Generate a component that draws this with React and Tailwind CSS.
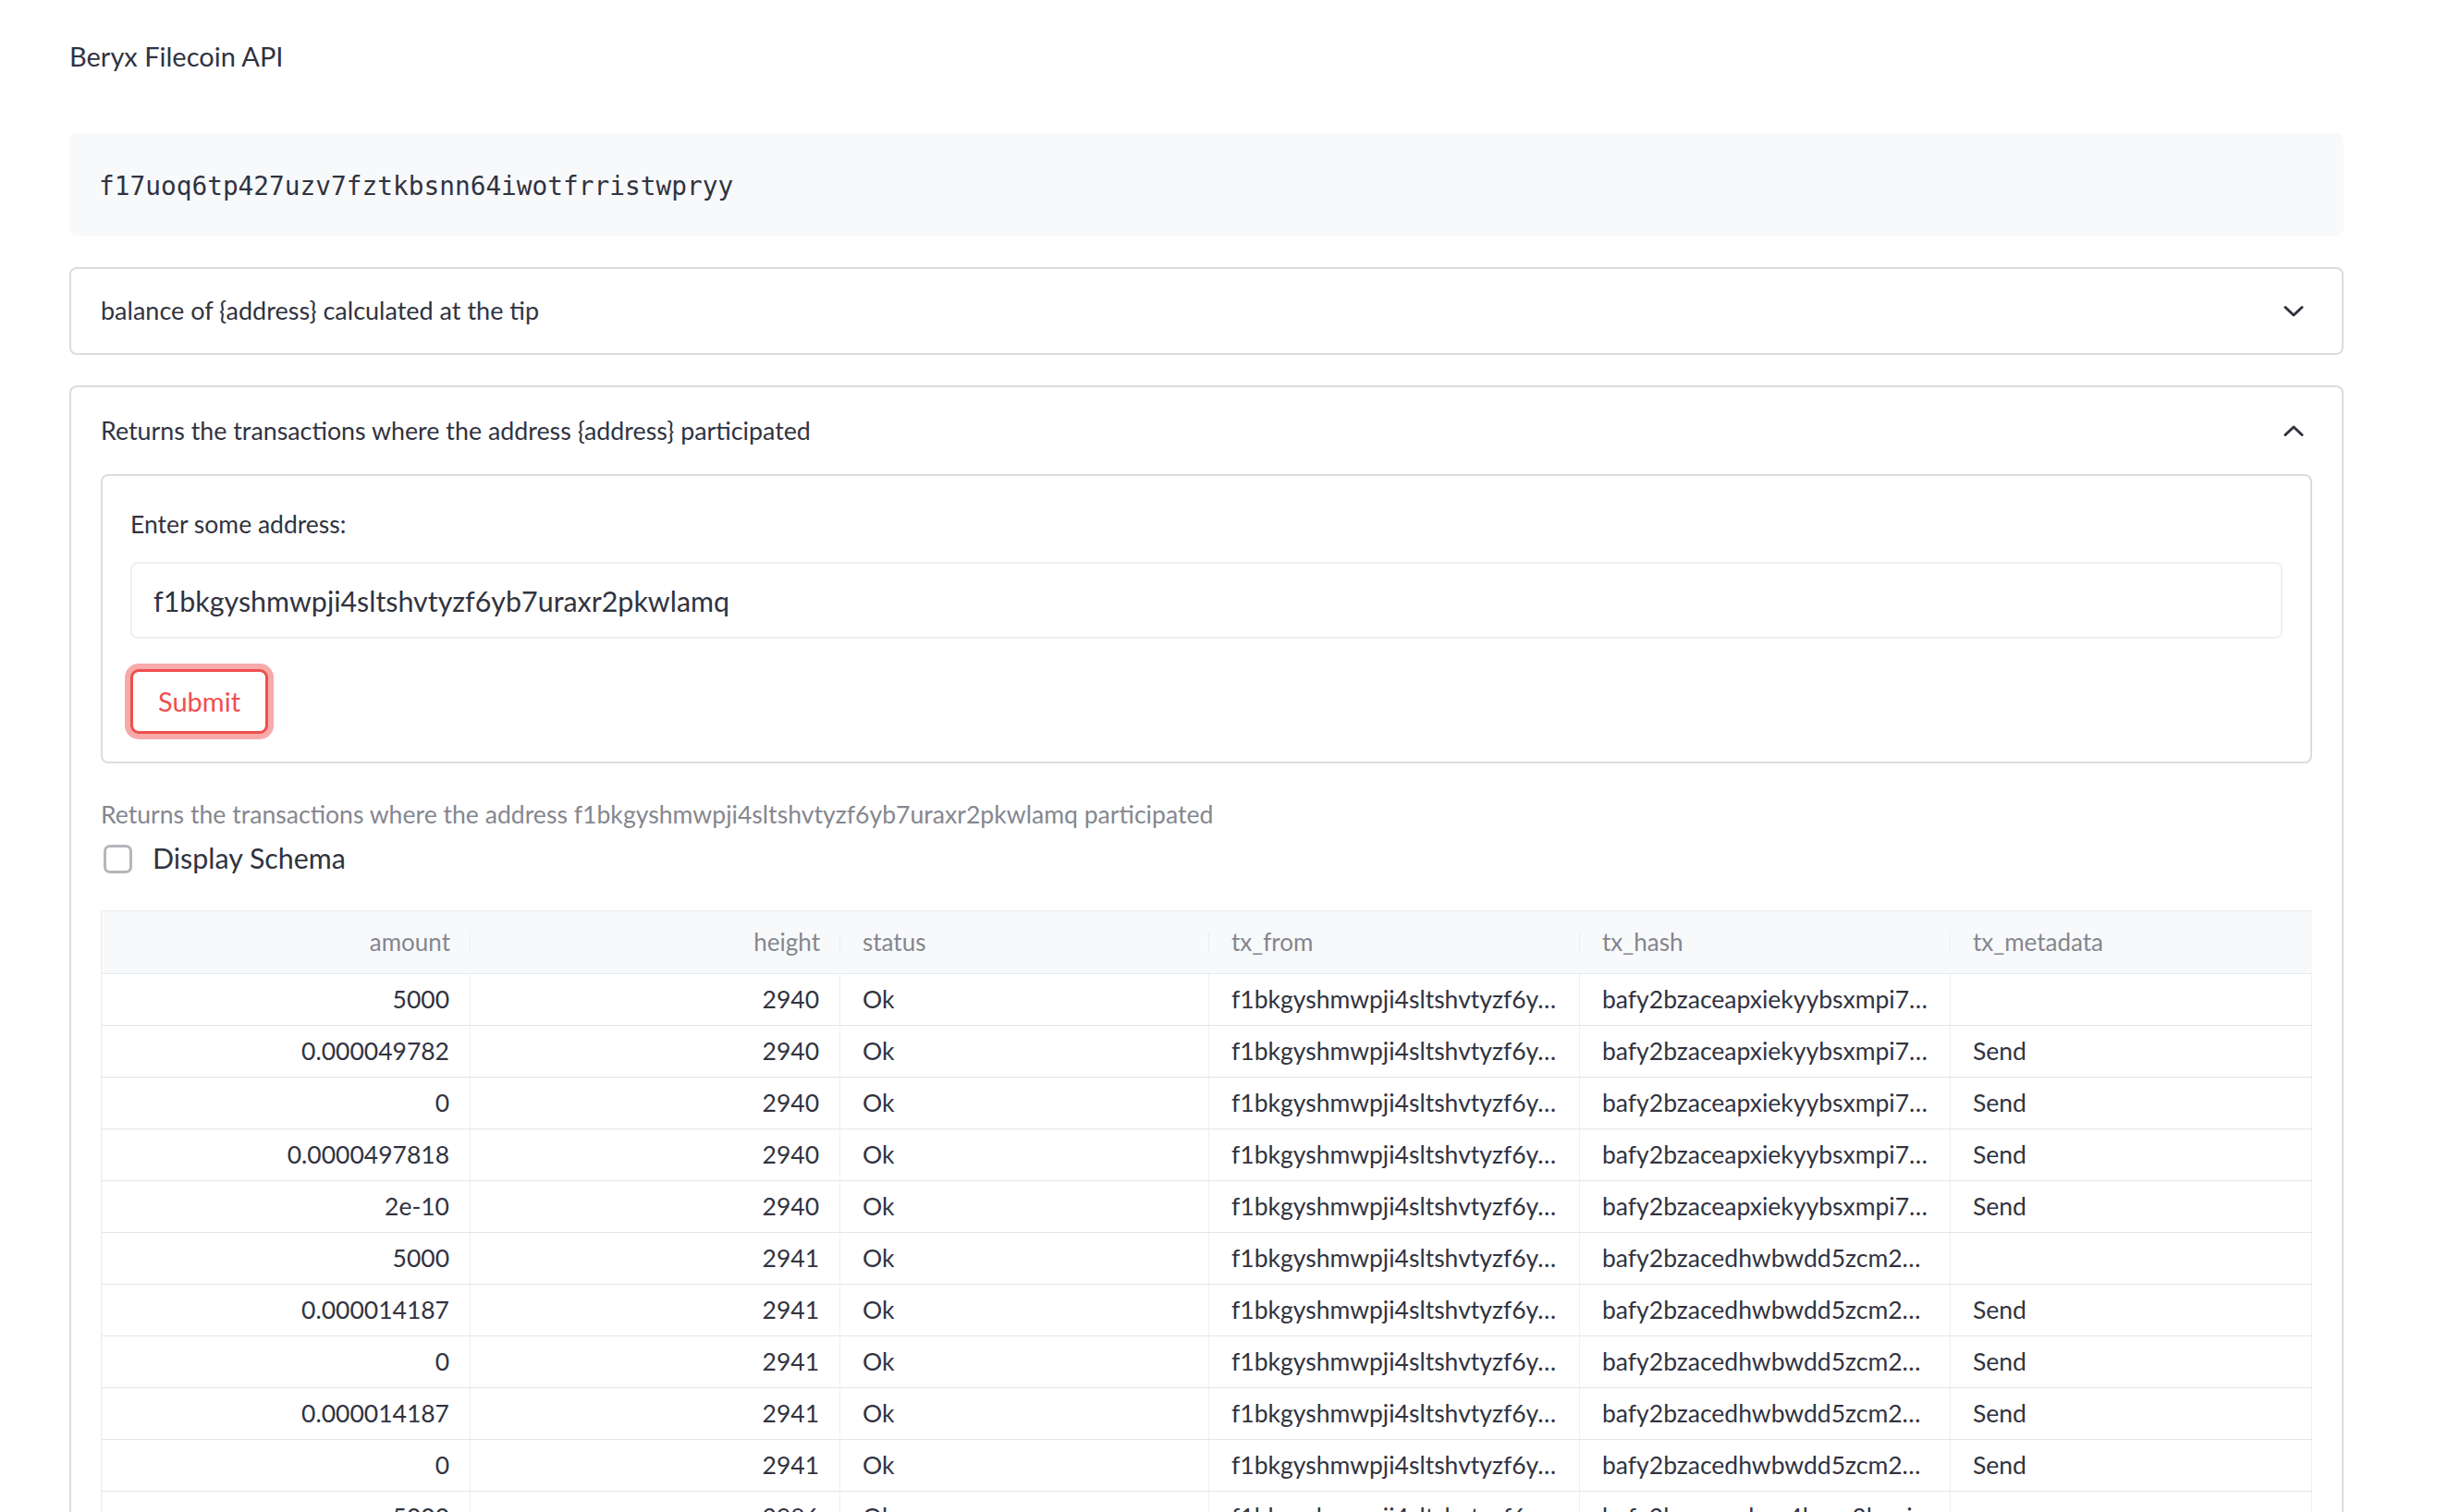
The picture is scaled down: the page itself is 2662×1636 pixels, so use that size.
import { useState } from 'react';

const FROM = 'f1bkgyshmwpji4sltshvtyzf6y…';
const HASH_A = 'bafy2bzaceapxiekyybsxmpi7…';
const HASH_B = 'bafy2bzacedhwbwdd5zcm2…';

const rows = [
    ['5000', '2940', 'Ok', FROM, HASH_A, ''],
    ['0.000049782', '2940', 'Ok', FROM, HASH_A, 'Send'],
    ['0', '2940', 'Ok', FROM, HASH_A, 'Send'],
    ['0.0000497818', '2940', 'Ok', FROM, HASH_A, 'Send'],
    ['2e-10', '2940', 'Ok', FROM, HASH_A, 'Send'],
    ['5000', '2941', 'Ok', FROM, HASH_B, ''],
    ['0.000014187', '2941', 'Ok', FROM, HASH_B, 'Send'],
    ['0', '2941', 'Ok', FROM, HASH_B, 'Send'],
    ['0.000014187', '2941', 'Ok', FROM, HASH_B, 'Send'],
    ['0', '2941', 'Ok', FROM, HASH_B, 'Send'],
    ['5000', '2986', 'Ok', FROM, 'bafy2bzaceacbov4kave3bepi…', ''],
];

const columns = [
    { name: 'amount', right: true },
    { name: 'height', right: true },
    { name: 'status' },
    { name: 'tx_from' },
    { name: 'tx_hash' },
    { name: 'tx_metadata' },
];

function Chevron({ up }) {
    return (
        <svg width="22" height="14" viewBox="0 0 22 14" fill="none" stroke="#31333F" strokeWidth="3" strokeLinecap="round" strokeLinejoin="round">
            {up ? <path d="M2 11.5 L11 3 L20 11.5" /> : <path d="M2 2.5 L11 11 L20 2.5" />}
        </svg>
    );
}

function Table() {
    return (
        <div className="border border-[#e9ebef] border-r-0 grid grid-cols-[399px_400px_399px_401px_401px_391px] text-[26.5px]">
            {columns.map((c, i) => (
                <div
                    key={c.name}
                    className={`relative h-[68px] bg-[#f8f9fb] border-b border-b-[#e6e8ed] flex items-center text-[26px] text-[#84868f] ${c.right ? 'justify-end pr-[22px]' : 'pl-[24px]'}`}
                >
                    {c.name}
                    {i < columns.length - 1 && <span className="absolute right-[-1px] top-[23px] h-[22px] w-[2px] bg-[#eceef1]" />}
                </div>
            ))}
            {rows.map((r, ri) =>
                r.map((v, ci) => (
                    <div
                        key={ri + '-' + ci}
                        className={`h-[56px] flex items-center border-b border-b-[#e2e5ec] border-r border-r-[#eef0f3] overflow-hidden whitespace-nowrap ${columns[ci].right ? 'justify-end pr-[22px]' : 'pl-[24px]'}`}
                    >
                        {v}
                    </div>
                ))
            )}
        </div>
    );
}

export default function App() {
    const [address, setAddress] = useState('f1bkgyshmwpji4sltshvtyzf6yb7uraxr2pkwlamq');
    const [schema, setSchema] = useState(false);

    return (
        <div className="h-[1636px] overflow-hidden bg-white text-[#31333F] font-[Lato,sans-serif]">
            <div className="ml-[75px] w-[2460px]">
                <h1 className="pt-[41px] h-[81px] leading-[40px] text-[29px]">Beryx Filecoin API</h1>

                <div className="mt-[63px] h-[111px] rounded-[8px] bg-[#f8f9fb] px-[32px] pt-[5px] flex items-center font-['DejaVu_Sans_Mono',monospace] text-[27.8px]">
                    f17uoq6tp427uzv7fztkbsnn64iwotfrristwpryy
                </div>

                <div className="mt-[34px] h-[95px] rounded-[8px] border-2 border-[#dcdce0] pl-[32px] pr-[41px] flex items-center justify-between text-[27px]">
                    <span>balance of {'{address}'} calculated at the tip</span>
                    <Chevron />
                </div>

                <div className="mt-[33px] rounded-[8px] border-2 border-[#dcdce0] pb-[40px]">
                    <div className="h-[94px] pl-[32px] pr-[41px] flex items-center justify-between text-[26.8px]">
                        <span>Returns the transactions where the address {'{address}'} participated</span>
                        <Chevron up />
                    </div>

                    <div className="px-[32px]">
                        <form
                            onSubmit={(e) => e.preventDefault()}
                            className="rounded-[8px] border-2 border-[#dcdce0] px-[30px] pt-[36px] pb-[30px]"
                        >
                            <label className="block h-[32px] leading-[32px] text-[26.5px]">Enter some address:</label>
                            <input
                                value={address}
                                onChange={(e) => setAddress(e.target.value)}
                                className="mt-[25px] block w-full h-[83px] rounded-[8px] border-2 border-[#eff0f4] bg-white pl-[23px] text-[30.4px] text-[#31333F] outline-none"
                            />
                            <button
                                type="submit"
                                className="mt-[33px] block w-[149px] h-[70px] rounded-[9px] border-[3px] border-[#f04e4e] bg-white text-[#f04e4e] text-[29px] shadow-[0_0_0_6px_#f7aaa9]"
                            >
                                Submit
                            </button>
                        </form>

                        <p className="mt-[37px] h-[36px] leading-[36px] text-[26.6px] text-[#85878f]">
                            Returns the transactions where the address f1bkgyshmwpji4sltshvtyzf6yb7uraxr2pkwlamq participated
                        </p>

                        <label className="mt-[12px] h-[36px] flex items-center gap-[22px] pl-[3px] text-[30.4px]">
                            <span
                                onClick={() => setSchema(!schema)}
                                className={`w-[31px] h-[31px] rounded-[7px] border-[3px] ${schema ? 'bg-[#f04e4e] border-[#f04e4e]' : 'border-[#b5b6bc]'}`}
                            />
                            Display Schema
                        </label>

                        <div className="mt-[38px]">
                            <Table />
                        </div>
                    </div>
                </div>
            </div>
        </div>
    );
}
